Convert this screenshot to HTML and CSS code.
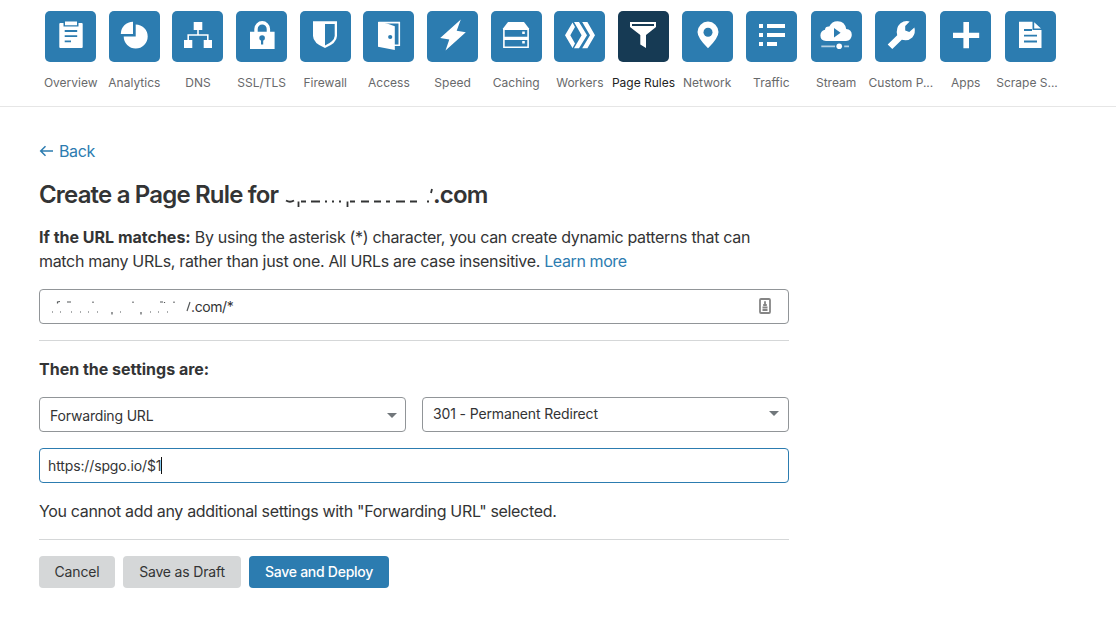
FILE: index.html
```
<!DOCTYPE html>
<html lang="en">
<head>
<meta charset="utf-8">
<title>Create a Page Rule</title>
<link rel="stylesheet" href="styles.css">
</head>
<body>
<nav class="nav">
  <a class="item"><svg class="tile" viewBox="0 0 51 51"><path class="w" d="M15.3 12H18.5V15.5H33.5V12H36.7Q37.7 12 37.7 13V36Q37.7 37 36.7 37H15.3Q14.3 37 14.3 36V13Q14.3 12 15.3 12ZM20 10.5H32V14.2H20Z"/><path class="cut" d="M19.7 20H32.2M19.7 25.2H32.2M19.7 30.4H26"/></svg><span>Overview</span></a>
  <a class="item"><svg class="tile" viewBox="0 0 51 51"><path class="w" d="M24 10.7V23H11.8A12.2 12.2 0 0 1 24 10.7ZM26.7 13.4A12 12 0 1 1 14.7 25.4H26.7Z"/></svg><span>Analytics</span></a>
  <a class="item"><svg class="tile" viewBox="0 0 51 51"><path class="w" d="M21.7 11H30.3V19H21.7ZM12 29H20.3V37H12ZM31.7 29H40V37H31.7Z"/><path class="line thin" d="M26 19V24M16.2 29V24H35.8V29"/></svg><span>DNS</span></a>
  <a class="item"><svg class="tile" viewBox="0 0 51 51"><path class="w" d="M14 20.7H38.6V38H14Z"/><path class="line thick" d="M20 21V18A6.2 6.2 0 0 1 32.4 18V21"/><circle class="b" cx="26.1" cy="27" r="2.8"/><path class="b" d="M25 28H27.2V33.5H25Z"/></svg><span>SSL/TLS</span></a>
  <a class="item"><svg class="tile" viewBox="0 0 51 51"><path class="w" d="M13 10.2H37V25Q37 32 25 37Q13 32 13 25Z"/><path class="b" d="M25 13H34.7V25Q34.2 30.4 25 34.5Z"/></svg><span>Firewall</span></a>
  <a class="item"><svg class="tile" viewBox="0 0 51 51"><path class="line thin" d="M16 11.6H36.3V34.3H31"/><path class="w" d="M15 10.8L24 12.5L31.8 15.2V39L15 35.8Z"/><circle class="b" cx="27.2" cy="26" r="2.1"/></svg><span>Access</span></a>
  <a class="item"><svg class="tile" viewBox="0 0 51 51"><path class="w" d="M33.8 8.6L13.2 27L22.3 28.5L18.5 39.5L38.8 21.3L29.7 19.7Z"/></svg><span>Speed</span></a>
  <a class="item"><svg class="tile" viewBox="0 0 51 51"><path class="w" d="M17 11H33L38 17.5V19H12V17.5Z"/><path class="line thin" d="M12.9 18.3H37.1V26.6H12.9ZM12.9 28.1H37.1V36.2H12.9Z"/><path class="w" d="M31.2 20.5H33.8V23H31.2ZM31.2 30H33.8V32.5H31.2Z"/></svg><span>Caching</span></a>
  <a class="item"><svg class="tile" viewBox="0 0 51 51"><path class="w" d="M18.5 11.5L11 24.3L18.5 37L21 32.5L16.3 24.3L21 16ZM20 11H25L33 24.3L25 37.3H20L27.6 24.3ZM28.2 11H33.4L41 24.3L33.4 37.3H28.2L36 24.3Z"/></svg><span>Workers</span></a>
  <a class="item active"><svg class="tile" viewBox="0 0 51 51"><path class="w" d="M12 11H38V16L28 24V37L22.3 33.5V24L12 16Z"/><path class="b" d="M14 13H36V15H14Z"/></svg><span>Page Rules</span></a>
  <a class="item"><svg class="tile" viewBox="0 0 51 51"><path class="w" d="M26 10.6A10.5 10.5 0 0 0 15.5 21Q15.5 27 26 37.3Q36.5 27 36.5 21A10.5 10.5 0 0 0 26 10.6Z"/><circle class="b" cx="26" cy="21.2" r="4.5"/></svg><span>Network</span></a>
  <a class="item"><svg class="tile" viewBox="0 0 51 51"><path class="w" d="M13 13H17V17H13ZM21 13H39V17H21ZM13 22H17V26H13ZM21 22H39V26H21ZM13 31H17V35H13ZM21 31H31V35H21Z"/></svg><span>Traffic</span></a>
  <a class="item"><svg class="tile" viewBox="0 0 51 51"><path class="w" d="M15 30Q9.4 29.5 9.4 24.5Q9.4 20 14 18.8Q14 15.2 18.3 15.4Q21 10 26.7 10.2Q34 10.5 35.2 18Q40.8 18.5 40.8 24Q40.5 29.5 35 30Z"/><path class="b" d="M23 17L29.6 21.7L23 26.5Z"/><path class="line thin faded" d="M10.3 35.4H24M33.2 35.4H38"/><circle class="w" cx="28.2" cy="35.3" r="2.8"/></svg><span>Stream</span></a>
  <a class="item"><svg class="tile" viewBox="0 0 51 51"><path class="w" d="M12.7 33.5L22.2 24.2Q20.5 16.8 25.5 12.3Q30 9 34.7 10.5L30.2 15V19.6L34.3 21L39.4 16.5Q41 22 37.3 26.5Q33.5 30.3 26.8 28.7L17.3 38Z"/></svg><span>Custom P...</span></a>
  <a class="item"><svg class="tile" viewBox="0 0 51 51"><path class="w" d="M23.4 11H29V21.7H39.2V26.9H29V37.2H23.4V26.9H13V21.7H23.4Z"/></svg><span>Apps</span></a>
  <a class="item last"><svg class="tile" viewBox="0 0 51 51"><path class="w" d="M14 10.8H27.5V19H36.5V37H14ZM29.2 11.3L36 17.6H29.2Z"/><path class="cut" d="M19 19H27M19 24.7H32M19 30.5H32"/></svg><span>Scrape S...</span></a>
</nav>
<main class="content">
  <a class="back"><svg class="arrow" viewBox="0 0 14 12"><path d="M13.5 6H1.2M6 1.2L1.2 6L6 10.8"/></svg>Back</a>
  <h1 class="title"><span class="lead">Create a Page Rule for</span><svg class="hidden-name" viewBox="0 0 154 30"><path d="M7 20.5Q11 23 15 20.5M19.5 21.5V27M22 21.5H27M32 21.5H41M46 21.5H48M53 21.5H55M60 21.5H62M68.5 21.5V27M71 21.5H76M82 21.5H90M95 21.5H102M107 21.5H111M117 21.5H126M131 21.5H138M148 21.5H150M153 9L152 13"/></svg><span>.com</span></h1>
  <p class="intro"><b>If the URL matches:</b> By using the asterisk (*) character, you can create dynamic patterns that can<br>match many URLs, rather than just one. All URLs are case insensitive. <a>Learn more</a></p>
  <div class="field url"><svg class="hidden-url" viewBox="0 0 151 24"><path d="M17.5 8.5V7L20 6.5M27 7H31M53 6.5V8M93 6.5V8M120 7H123M124.5 7V8M134 6.5V8M72 17V19.5M101 17V19.5M12 17H13M20 17H21M31 17H32M40 17H41M48 17H49M57 17H58M80 17H81M110 17H111M118 17H119M127 17H128M150 7L147 16"/></svg><span class="address">.com/*</span><svg class="card" viewBox="0 0 12 16"><rect x="1" y="1" width="10" height="14" rx="1"/><path d="M6 3.2V8M4.2 7H7.8M3.5 9.5H8.5M3.5 12H8.5"/></svg></div>
  <hr>
  <h2 class="subtitle">Then the settings are:</h2>
  <div class="selects">
    <div class="field select first"><span>Forwarding URL</span><i class="caret"></i></div>
    <div class="field select second"><span>301 - Permanent Redirect</span><i class="caret"></i></div>
  </div>
  <div class="field focus"><span>https://spgo.io/$1</span><i class="cursor"></i></div>
  <p class="note">You cannot add any additional settings with "Forwarding URL" selected.</p>
  <hr>
  <div class="buttons"><button class="cancel">Cancel</button><button class="draft">Save as Draft</button><button class="deploy">Save and Deploy</button></div>
</main>
</body>
</html>
```
FILE: styles.css
```
* { box-sizing: border-box; }
body { margin: 0; background: #fff; color: #333435; font-family: Inter, "Liberation Sans", sans-serif; font-size: 16px; }
.nav { height: 107px; padding: 11px 0 0 38.9px; display: grid; grid-template-columns: repeat(11, 63.65px) repeat(5, 64.8px); border-bottom: 1px solid #e6e6e6; }
.item { display: flex; flex-direction: column; align-items: center; gap: 12px; color: #68696b; font-size: 12px; line-height: 18px; white-space: nowrap; letter-spacing: 0; }
.tile { width: 51px; height: 51px; border-radius: 5px; background: #2c7cb0; --tile: #2c7cb0; }
.active { color: #222; }
.active .tile { background: #163a54; --tile: #163a54; }
.last span { margin-left: -7px; }
.w { fill: #fff; }
.b { fill: var(--tile); }
.cut { stroke: var(--tile); stroke-width: 1.8; fill: none; }
.line { stroke: #fff; fill: none; }
.thin { stroke-width: 1.6; }
.thick { stroke-width: 3.4; }
.faded { opacity: .65; }
.content { width: 789px; padding-left: 39px; }
.back { display: flex; align-items: center; gap: 5px; margin-top: 32px; height: 24px; color: #2c7cb0; letter-spacing: -0.35px; }
.arrow { width: 15px; height: 12px; fill: none; stroke: #2c7cb0; stroke-width: 1.5; }
.title { display: flex; align-items: center; margin: 17px 0 0; height: 30px; font-size: 24px; line-height: 30px; font-weight: 600; letter-spacing: -0.82px; white-space: nowrap; }
.lead { width: 240px; }
.hidden-name { width: 154px; height: 30px; fill: none; stroke: #333435; stroke-width: 1.8; }
.intro { margin: 15px 0 0; height: 48px; line-height: 24px; letter-spacing: -0.32px; white-space: nowrap; }
.intro b { letter-spacing: 0; }
.intro a { color: #2c7cb0; letter-spacing: -0.4px; }
.field { display: flex; align-items: center; height: 35px; border: 1px solid #919598; border-radius: 4px; font-size: 14px; letter-spacing: -0.13px; white-space: nowrap; }
.url { margin-top: 16px; }
.address { letter-spacing: -0.4px; }
.hidden-url { width: 151px; height: 24px; flex: none; fill: none; stroke: #55585a; stroke-width: 1.2; }
.card { width: 12px; height: 16px; margin: 0 17px 2px auto; fill: none; stroke: #858585; stroke-width: 1.8; }
hr { border: 0; height: 1px; background: #d5d7d8; margin: 16px 0 0; }
.subtitle { margin: 16px 0 0; font-size: 16px; line-height: 24px; letter-spacing: 0; }
.selects { display: grid; grid-template-columns: 367px 367px; gap: 16px; margin-top: 16px; }
.select { justify-content: space-between; padding: 0 8px 0 10px; }
.first { padding-top: 2px; letter-spacing: -0.18px; }
.second { padding: 0 9px 2px 10px; }
.caret { border: 5px solid transparent; border-top-color: #71777b; border-bottom: 0; }
.focus { margin-top: 16px; padding-left: 8px; }
.field.focus { border-color: #2c7cb0; }
.cursor { width: 1px; height: 17px; background: #111; }
.note { margin: 16px 0 0; line-height: 24px; letter-spacing: -0.33px; white-space: nowrap; }
.buttons { display: flex; gap: 8px; margin-top: 16px; }
button { height: 32px; padding: 0 0 1px; border: 0; border-radius: 4px; background: #d5d7d8; color: #333435; font: 14px Inter, "Liberation Sans", sans-serif; letter-spacing: -0.18px; }
.cancel { width: 76px; }
.draft { width: 118px; }
.deploy { width: 140px; color: #fff; background: #2c7cb0; font-weight: 500; letter-spacing: -0.27px; }
```
